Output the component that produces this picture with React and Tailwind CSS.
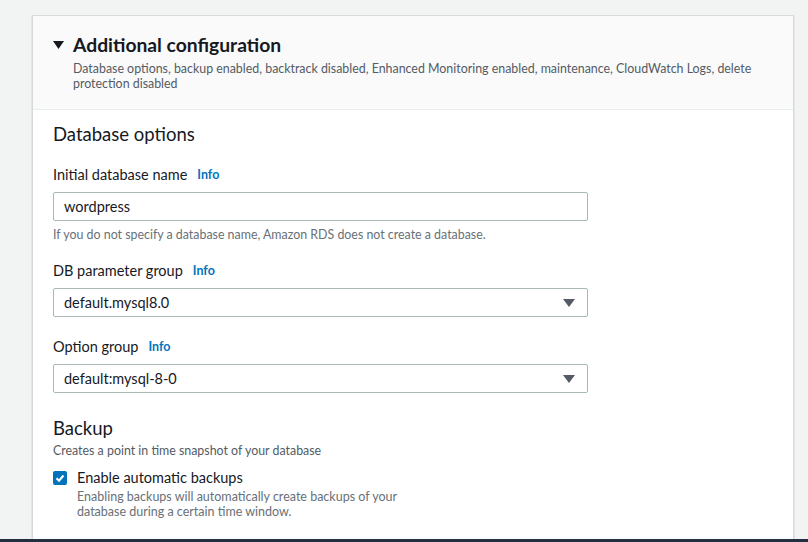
function Info() {
  return <span className="ml-[10px] text-[12.5px] font-bold text-[#0073bb]">Info</span>;
}

function Caret() {
  return (
    <svg width="12" height="8" viewBox="0 0 12 8" className="fill-[#545b64]">
      <path d="M0 0h12L6 8z" />
    </svg>
  );
}

function SelectBox({ value }) {
  return (
    <div className="flex h-[29px] w-[535px] items-center justify-between rounded-[2px] border border-[#aab7b8] bg-white pl-[10px] pr-[12px] text-[14.5px] text-[#16191f]">
      <span>{value}</span>
      <Caret />
    </div>
  );
}

export default function App() {
  return (
    <div className="flex h-[542px] flex-col bg-[#f2f3f3] font-['Lato','Liberation_Sans',sans-serif] text-[#16191f]">
      <div className="flex-1 overflow-hidden pl-[32px] pr-[14px] pt-[15px]">
        <div className="h-full border-l border-r border-t border-[#d5dbdb] bg-white shadow-[0_1px_1px_rgba(0,28,36,0.3)]">
          {/* Header */}
          <div className="border-b border-[#eaeded] bg-[#fafafa] pb-[18px] pl-[20px] pr-[20px] pt-[18px]">
            <div className="flex items-center">
              <svg width="11" height="8" viewBox="0 0 11 8" className="mr-[9px] fill-[#16191f]">
                <path d="M0 0h11L5.5 8z" />
              </svg>
              <h2 className="text-[19.3px] font-bold leading-[22px]">Additional configuration</h2>
            </div>
            <p className="mt-[5px] pl-[20px] pr-[10px] text-[12.4px] leading-[15px] text-[#545b64]">
              Database options, backup enabled, backtrack disabled, Enhanced Monitoring enabled, maintenance, CloudWatch Logs, delete protection disabled
            </p>
          </div>

          {/* Body */}
          <div className="px-[20px] pt-[13px]">
            <h3 className="text-[18.5px] leading-[22px]">Database options</h3>

            <div className="mt-[21px]">
              <div className="flex items-center text-[14.5px] leading-[18px]">
                Initial database name <Info />
              </div>
              <div className="mt-[8px] flex h-[29px] w-[535px] items-center rounded-[2px] border border-[#aab7b8] bg-white pl-[10px] text-[14.5px]">
                wordpress
              </div>
              <p className="mt-[6px] text-[12.4px] leading-[15px] text-[#687078]">
                If you do not specify a database name, Amazon RDS does not create a database.
              </p>
            </div>

            <div className="mt-[20px]">
              <div className="flex items-center text-[14.5px] leading-[18px]">
                DB parameter group <Info />
              </div>
              <div className="mt-[8px]">
                <SelectBox value="default.mysql8.0" />
              </div>
            </div>

            <div className="mt-[21px]">
              <div className="flex items-center text-[14.5px] leading-[18px]">
                Option group <Info />
              </div>
              <div className="mt-[8px]">
                <SelectBox value="default:mysql-8-0" />
              </div>
            </div>

            <h3 className="mt-[24px] text-[18.5px] leading-[22px]">Backup</h3>
            <p className="mt-[4px] text-[12.4px] leading-[15px] text-[#545b64]">
              Creates a point in time snapshot of your database
            </p>

            <div className="mt-[11px] flex items-start">
              <div className="mt-[2px] flex h-[14px] w-[14px] items-center justify-center rounded-[2px] bg-[#0073bb]">
                <svg width="10" height="10" viewBox="0 0 10 10" fill="none" stroke="white" strokeWidth="2">
                  <path d="M1.5 5.2l2.5 2.5 4.5-5.2" />
                </svg>
              </div>
              <div className="ml-[10px]">
                <div className="text-[14.5px] leading-[18px]">Enable automatic backups</div>
                <p className="mt-[2px] w-[340px] text-[12.5px] leading-[15px] text-[#687078]">
                  Enabling backups will automatically create backups of your database during a certain time window.
                </p>
              </div>
            </div>
          </div>
        </div>
      </div>
      <div className="h-[3px] bg-[#232f3e]" />
    </div>
  );
}
